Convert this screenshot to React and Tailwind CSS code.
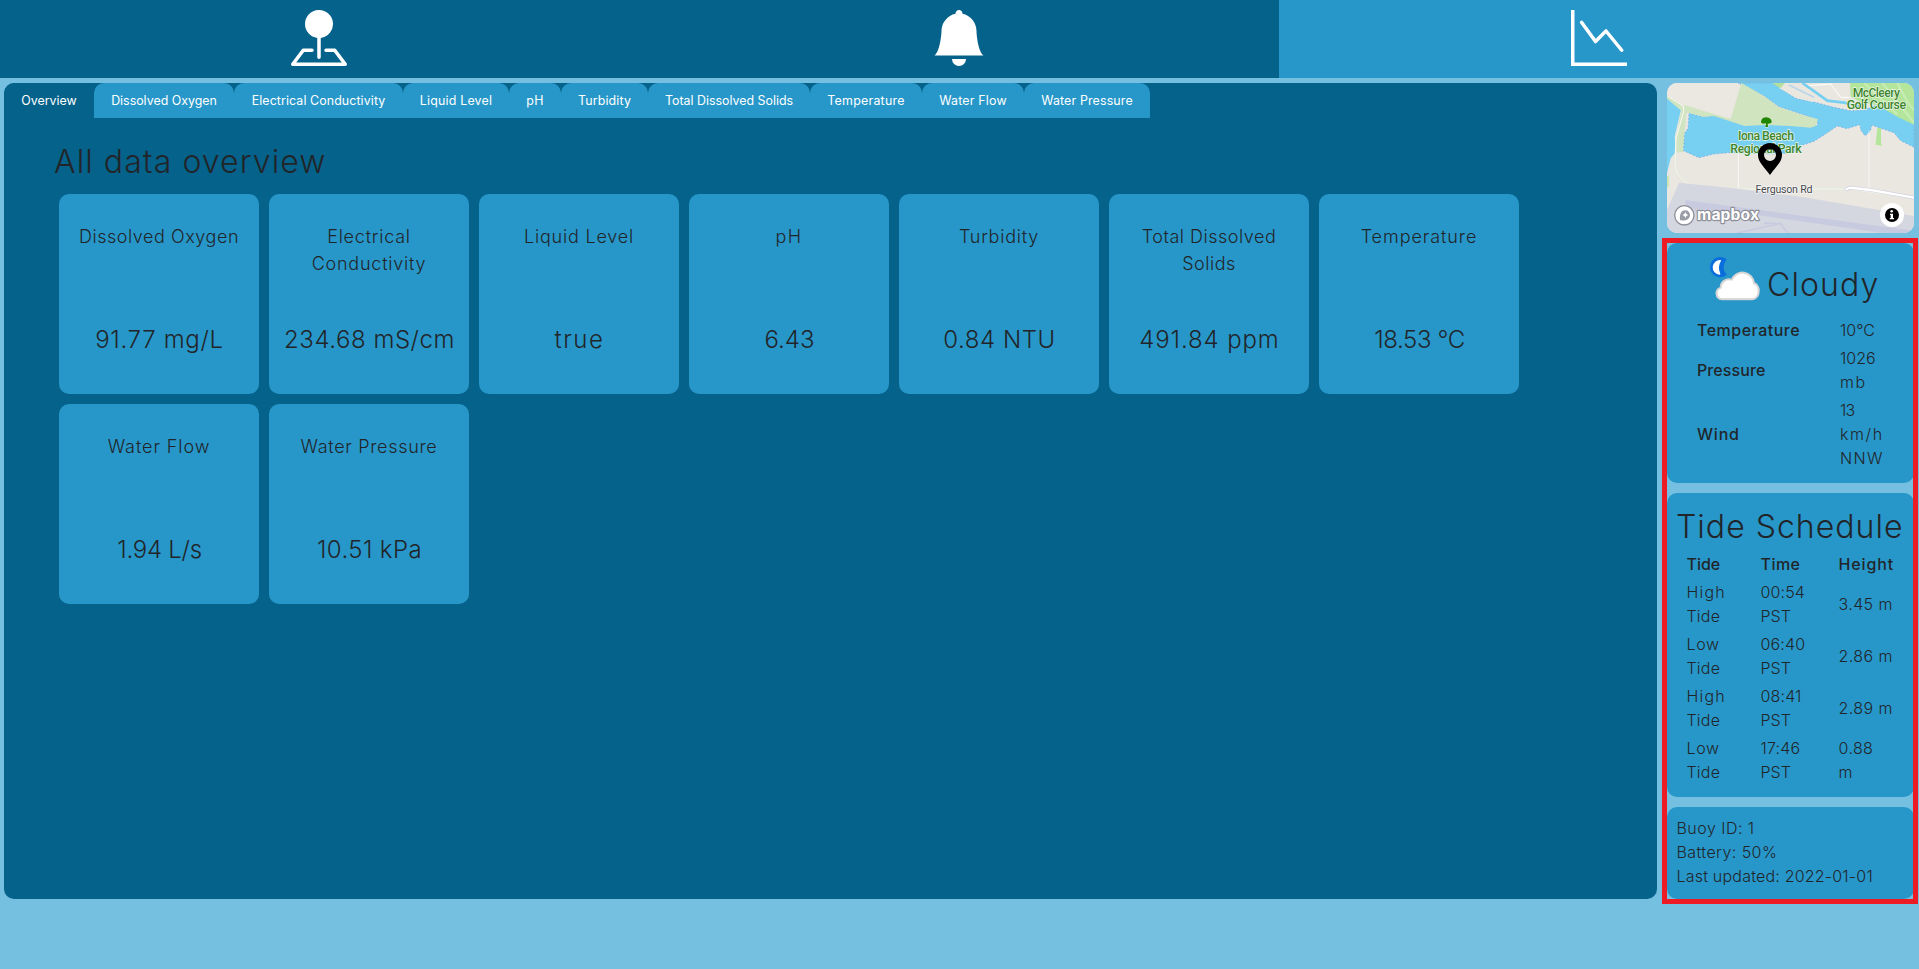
import React from "react";
import { BsPinMapFill, BsBellFill, BsGraphDown } from "react-icons/bs";

const tabs = [
  { label: "Overview", cls: "w-[90px] bg-[#05628b]" },
  { label: "Dissolved Oxygen", cls: "w-[140px] bg-[#2797c9]" },
  { label: "Electrical Conductivity", cls: "w-[169px] tracking-[0.1px] bg-[#2797c9]" },
  { label: "Liquid Level", cls: "w-[106px] tracking-[0.2px] bg-[#2797c9]" },
  { label: "pH", cls: "w-[52px] tracking-[0.4px] bg-[#2797c9]" },
  { label: "Turbidity", cls: "w-[87px] tracking-[0.15px] bg-[#2797c9]" },
  { label: "Total Dissolved Solids", cls: "w-[162px] bg-[#2797c9]" },
  { label: "Temperature", cls: "w-[112px] tracking-[0.25px] bg-[#2797c9]" },
  { label: "Water Flow", cls: "w-[102px] tracking-[0.2px] bg-[#2797c9]" },
  { label: "Water Pressure", cls: "w-[126px] tracking-[0.15px] bg-[#2797c9]" },
];

const metrics = [
  { title: "Dissolved Oxygen", ts: "tracking-[0.55px]", value: "91.77 mg/L", vs: "tracking-[0.68px]" },
  { title: "Electrical Conductivity", ts: "tracking-[0.77px] px-6", value: "234.68 mS/cm", vs: "tracking-[0.54px]" },
  { title: "Liquid Level", ts: "tracking-[0.8px]", value: "true", vs: "tracking-[1.6px]" },
  { title: "pH", ts: "tracking-[1.4px]", value: "6.43", vs: "" },
  { title: "Turbidity", ts: "tracking-[0.77px]", value: "0.84 NTU", vs: "tracking-[0.55px]" },
  { title: "Total Dissolved Solids", ts: "tracking-[0.5px] px-6", value: "491.84 ppm", vs: "tracking-[0.88px]" },
  { title: "Temperature", ts: "tracking-[0.94px]", value: "18.53 °C", vs: "tracking-[-0.38px]" },
  { title: "Water Flow", ts: "tracking-[0.93px]", value: "1.94 L/s", vs: "tracking-[-0.25px]" },
  { title: "Water Pressure", ts: "tracking-[0.68px]", value: "10.51 kPa", vs: "tracking-[0.39px]" },
];

const tides = [
  { kind: "High", ks: "tracking-[1.2px]", time: "00:54", height: ["3.45 m"] },
  { kind: "Low", ks: "tracking-[0.65px]", time: "06:40", height: ["2.86 m"] },
  { kind: "High", ks: "tracking-[1.2px]", time: "08:41", height: ["2.89 m"] },
  { kind: "Low", ks: "tracking-[0.65px]", time: "17:46", height: ["0.88", "m"] },
];

function MapPreview() {
  return (
    <div className="h-[150px] overflow-hidden rounded-[10px]">
      <svg className="block h-[150px] w-[247px]" viewBox="9 9 741 450" preserveAspectRatio="none">
        <rect x="9" y="9" width="741" height="450" fill="#eae6e0" />
        <path d="M12 9H232L200 117L68 75L9 48Z" fill="#ebe7e1" />
        <path d="M9 52L52 84L32 170L36 215L20 235L9 280Z" fill="#77d0f2" />
        <path d="M9 48L68 84L66 104L58 215L38 218L36 170L52 92L9 56Z" fill="#d0e4c0" />
        <path d="M75 99L118 110L150 107L240 134L310 130L380 131L440 142L462 134L455 118L400 98L345 80L300 48L222 9H325L395 55L450 66L510 82L560 92L600 90L640 74L700 100L750 128V202L710 182L690 158L650 145L624 136L618 155L603 167L590 150L588 134L548 146L520 138L480 165L450 184L415 196L390 218L330 222L195 218L150 222L105 233L58 212L62 160L72 145Z" fill="#77d0f2" stroke="#7396dc" strokeWidth="2" strokeDasharray="4 7" />
        <path d="M232 9L300 48L345 82L400 100L462 118L455 138L440 143L380 138L300 135L242 138L150 108L118 110L75 99L66 100L60 75L200 117Z" fill="#d0e4c0" />
        <path d="M325 9H362L350 25Z" fill="#b3e09c" />
        <path d="M345 24L410 9H470L500 45L475 52L445 66L398 54Z" fill="#eae6e0" />
        <path d="M375 15L450 52M405 9L500 52" stroke="#b9d5e8" strokeWidth="5" />
        <path d="M440 9L510 24L572 62L600 83L560 72L505 68L475 55L400 9Z" fill="#eae6e0" />
        <path d="M470 9H562V68L520 60Z" fill="#eae6e0" />
        <path d="M425 18L500 12L530 52H560M500 12V9" fill="none" stroke="#fff" strokeWidth="3" />
        <path d="M415 9L448 32L490 62L540 68L600 83" fill="none" stroke="#77d0f2" strokeWidth="8" />
        <path d="M558 9H750V134L700 110L640 76L590 66L560 50Z" fill="#b3e59b" />
        <path d="M655 9L750 128M700 9L730 65L750 90M600 9L700 104" stroke="#c6ecb4" strokeWidth="7" fill="none" />
        <path d="M640 144H651V190L655 197L635 194Z" fill="#b3e59b" />
        <path d="M12 49L58 78L59 95L36 175L33 250Q34 310 125 327H560L750 356" fill="none" stroke="#dce8cf" strokeWidth="4" />
        <path d="M12 49L58 78L59 95L36 175L33 250Q34 310 125 327H560L750 356M223 218V327M615 152V326" fill="none" stroke="#fbfaf8" strokeWidth="2.5" />
        <path d="M9 390L45 308L230 327L420 352L750 408V459H9Z" fill="#d5d7e0" />
        <path d="M64 360L92 364L420 408L750 452V459H655L230 398L66 384Z" fill="#c8cadf" />
        <path d="M92 386L105 410M220 459L350 430L370 459M340 430H300" fill="none" stroke="#c8cadf" strokeWidth="5" />
        <path d="M545 331Q550 322 568 324L620 330L750 353" fill="none" stroke="#cdd0df" strokeWidth="11" />
        <path d="M546 330Q550 322 568 324L620 330L750 353" fill="none" stroke="#fff" strokeWidth="7" />
        <path d="M9 290L14 285V318L9 325Z" fill="#c4e4a8" />
        <g className="font-[Roboto,sans-serif] text-[37px] font-medium" fill="#3d8530" stroke="#eef6e6" strokeWidth="4" paintOrder="stroke" textAnchor="middle">
          <text x="637" y="50" textLength="142">McCleery</text>
          <text x="637" y="88" textLength="178">Golf Course</text>
          <text x="306" y="181" textLength="168">Iona Beach</text>
          <text x="306" y="220" textLength="214">Regional Park</text>
        </g>
        <text className="font-[Roboto,sans-serif] text-[32px] font-normal" x="360" y="339" textAnchor="middle" textLength="171" fill="#45464b" stroke="#fff" strokeWidth="3" paintOrder="stroke">Ferguson Rd</text>
        <path d="M304 141L306 130Q290 134 291 124Q294 112 306 112Q319 112 323 123Q324 132 311 131L312 141Z" fill="#208500" stroke="#e6f2dc" strokeWidth="3" paintOrder="stroke" />
        <path fillRule="evenodd" d="M318 285C302 262 282 247 282 225A36 36 0 0 1 354 225C354 247 334 262 318 285ZM318 207A18 18 0 1 0 318 243A18 18 0 1 0 318 207Z" fill="#000" />
        <circle cx="61" cy="406" r="29" fill="#fff" stroke="#8d8f99" strokeWidth="4" />
        <path d="M48 421C46 400 53 391 64 391A14 14 0 0 1 78 405C78 418 65 423 48 421Z" fill="#9a9ca6" />
        <path d="M64 396L67 402L73 405L67 408L64 414L61 408L55 405L61 402Z" fill="#fff" />
        <text className="font-[Inter,sans-serif] text-[47px] font-bold" x="99" y="420" textLength="186" fill="#fff" stroke="#8d8f99" strokeWidth="7" strokeLinejoin="round" paintOrder="stroke">mapbox</text>
        <circle cx="684" cy="405" r="36" fill="#fff" />
        <circle cx="684" cy="405" r="21" fill="#000" />
        <circle cx="683" cy="394" r="3.8" fill="#fff" />
        <path d="M678 401H687V414H690V418H677V414H680V405H678Z" fill="#fff" />
      </svg>
    </div>
  );
}

function CloudIcon() {
  return (
    <svg className="h-[44px] w-[52px]" viewBox="177 80 156 132">
      <path d="M227 88A28 28 0 1 0 227 133A33 33 0 0 1 227 88Z" fill="#0a6fdc" stroke="#0a6fdc" strokeWidth="5" strokeLinejoin="round" />
      <path d="M211 91A20 20 0 0 0 209 131A43 43 0 0 1 211 91Z" fill="#fff" stroke="#fff" strokeWidth="4" strokeLinejoin="round" />
      <path d="M216 207A18 18 0 0 1 212 172A25 25 0 0 1 245 148A35 35 0 0 1 312 158A24 24 0 0 1 326 184A22 22 0 0 1 306 207Z" fill="#fff" stroke="#d4d4d4" strokeWidth="6" />
    </svg>
  );
}

export default function App() {
  return (
    <div className="flex h-screen flex-col overflow-hidden bg-[#75c0e0] font-[Inter,Montserrat,sans-serif] font-light text-[#212529]">
      <nav className="grid h-[78px] shrink-0 grid-cols-3 text-white">
        <div className="flex justify-center bg-[#05628b] pt-[10px] pr-[2px]"><BsPinMapFill className="size-14" /></div>
        <div className="flex justify-center bg-[#05628b] pt-[10px]"><BsBellFill className="size-14" /></div>
        <div className="flex justify-center bg-[#2797c9] pt-[10px]"><BsGraphDown className="size-14" /></div>
      </nav>

      <div className="flex gap-[10px] pt-[5px] pr-[5px] pl-1">
        <main className="h-[816px] flex-1 overflow-hidden rounded-[10px] bg-[#05628b]">
          <div className="flex">
            {tabs.map((t) => (
              <div key={t.label} className={`flex h-[35px] items-center justify-center rounded-t-[10px] text-[12.4px] leading-[19px] font-normal whitespace-nowrap text-white ${t.cls}`}>
                {t.label}
              </div>
            ))}
          </div>
          <h2 className="mt-[25px] ml-[50px] text-[32px] leading-[38px] tracking-[1.08px]">All data overview</h2>
          <div className="mt-[13px] ml-[55px] grid grid-cols-[repeat(7,200px)] gap-[10px] text-center">
            {metrics.map((m) => (
              <div key={m.title} className="h-[200px] rounded-[10px] bg-[#2797c9] pt-[29px]">
                <div className={`h-[99px] text-[18px] leading-[27px] ${m.ts}`}>{m.title}</div>
                <div className={`pl-px text-[24px] leading-9 whitespace-nowrap ${m.vs}`}>{m.value}</div>
              </div>
            ))}
          </div>
        </main>

        <aside className="flex w-[247px] shrink-0 flex-col gap-[10px] text-[16px] leading-6">
          <MapPreview />
          <div className="relative flex flex-col gap-[10px]">
            <section className="h-[240px] rounded-[10px] bg-[#2797c9]">
              <div className="flex h-[73px] gap-[6px] pl-[42px]">
                <div className="pt-[14px]"><CloudIcon /></div>
                <h2 className="pt-[23px] text-[32px] leading-[38px] tracking-[1.1px]">Cloudy</h2>
              </div>
              <div className="grid grid-cols-[143px_1fr] items-center pl-[30px] *:py-[2px]">
                <div className="font-medium tracking-[0.5px]">Temperature</div>
                <div>10°C</div>
                <div className="font-medium tracking-[0.1px]">Pressure</div>
                <div><div>1026</div><div className="tracking-[1.5px]">mb</div></div>
                <div className="font-medium tracking-[0.8px]">Wind</div>
                <div><div className="tracking-[-0.8px]">13</div><div className="tracking-[1.6px]">km/h</div><div className="tracking-[1.4px]">NNW</div></div>
              </div>
            </section>

            <section className="h-[304px] rounded-[10px] bg-[#2797c9] pt-[15px]">
              <h2 className="pl-[9px] text-[32px] leading-[38px] tracking-[1.02px] whitespace-nowrap">Tide Schedule</h2>
              <div className="mt-1 grid grid-cols-[74px_78px_1fr] items-center pl-[19.5px] *:py-[2px]">
                <div className="font-medium">Tide</div>
                <div className="font-medium tracking-[0.45px]">Time</div>
                <div className="font-medium tracking-[0.85px]">Height</div>
                {tides.map((t) => (
                  <React.Fragment key={t.time}>
                    <div><div className={t.ks}>{t.kind}</div><div className="tracking-[0.2px]">Tide</div></div>
                    <div><div className="tracking-[0.15px]">{t.time}</div><div>PST</div></div>
                    <div className="tracking-[0.4px]">{t.height.map((h) => <div key={h}>{h}</div>)}</div>
                  </React.Fragment>
                ))}
              </div>
            </section>

            <section className="h-[92px] rounded-[10px] bg-[#2797c9] pt-[9px] pl-[9.5px]">
              <div className="tracking-[0.47px]">Buoy ID: 1</div>
              <div className="tracking-[0.42px]">Battery: 50%</div>
              <div className="tracking-[0.2px]">Last updated: 2022-01-01</div>
            </section>
            <div className="pointer-events-none absolute -top-[5px] -right-[4px] -bottom-[5px] -left-[5px] border-[5px] border-[#ed1c24]" />
          </div>
        </aside>
      </div>
    </div>
  );
}
